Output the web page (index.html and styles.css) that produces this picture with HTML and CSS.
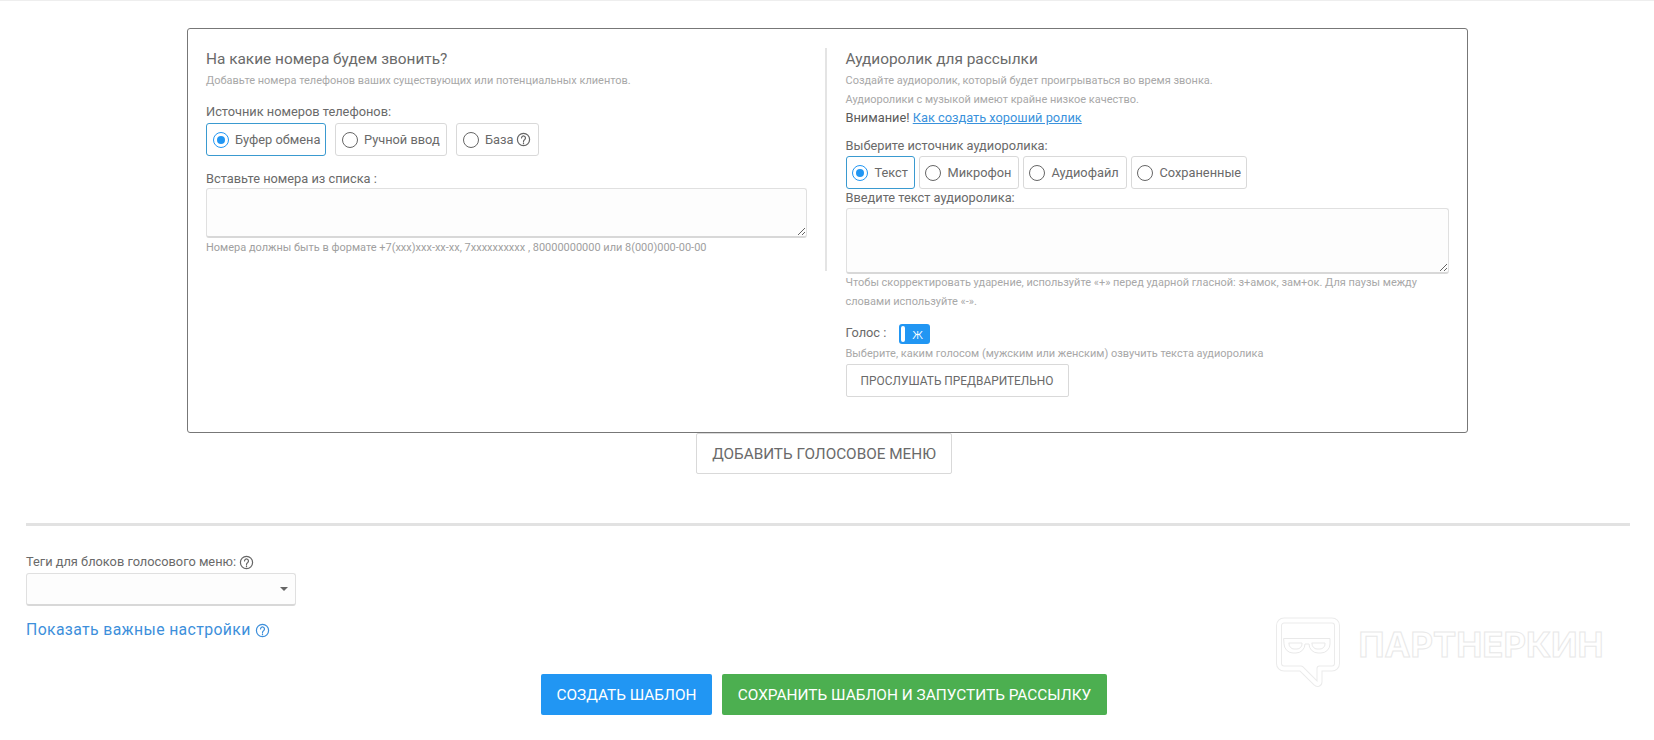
FILE: index.html
```html
<!DOCTYPE html>
<html lang="ru">
<head>
<meta charset="utf-8">
<title>Рассылка</title>
<link rel="stylesheet" href="styles.css">
</head>
<body>
<main class="page">
  <section class="card">
    <div class="col col-left">
      <h2 class="title">На какие номера будем звонить?</h2>
      <p class="hint hint-first">Добавьте номера телефонов ваших существующих или потенциальных клиентов.</p>
      <div class="label label-source">Источник номеров телефонов:</div>
      <div class="radios radios-left">
        <div class="radio active"><span class="dot"></span>Буфер обмена</div>
        <div class="radio"><span class="dot"></span>Ручной ввод</div>
        <div class="radio"><span class="dot"></span>База
          <svg class="q" viewBox="0 0 16 16"><circle cx="8" cy="8" r="6.5"/><path d="M5.9 6.3a2.1 2.1 0 1 1 3.4 1.7c-.8.6-1.3 1-1.3 2"/><path d="M8 11.6v.9"/></svg>
        </div>
      </div>
      <div class="label label-paste">Вставьте номера из списка :</div>
      <textarea class="area area-left"></textarea>
      <p class="hint hint-format">Номера должны быть в формате +7(xxx)xxx-xx-xx, 7xxxxxxxxxx , 80000000000 или 8(000)000-00-00</p>
    </div>
    <div class="col col-right">
      <h2 class="title">Аудиоролик для рассылки</h2>
      <p class="hint hint-first">Создайте аудиоролик, который будет проигрываться во время звонка.</p>
      <p class="hint">Аудиоролики с музыкой имеют крайне низкое качество.</p>
      <p class="attention">Внимание! <a class="link" href="#">Как создать хороший ролик</a></p>
      <div class="label label-audio">Выберите источник аудиоролика:</div>
      <div class="radios radios-right">
        <div class="radio active"><span class="dot"></span>Текст</div>
        <div class="radio"><span class="dot"></span>Микрофон</div>
        <div class="radio"><span class="dot"></span>Аудиофайл</div>
        <div class="radio"><span class="dot"></span>Сохраненные</div>
      </div>
      <div class="label label-text">Введите текст аудиоролика:</div>
      <textarea class="area area-right"></textarea>
      <p class="hint hint-stress">Чтобы скорректировать ударение, используйте «+» перед ударной гласной: з+амок, зам+ок. Для паузы между словами используйте «-».</p>
      <div class="voice">
        <span class="label">Голос :</span>
        <span class="toggle"><span class="knob"></span>ж</span>
      </div>
      <p class="hint hint-voice">Выберите, каким голосом (мужским или женским) озвучить текста аудиоролика</p>
      <button class="btn btn-listen" type="button">ПРОСЛУШАТЬ ПРЕДВАРИТЕЛЬНО</button>
    </div>
  </section>

  <div class="add-row">
    <button class="btn btn-add" type="button">ДОБАВИТЬ ГОЛОСОВОЕ МЕНЮ</button>
  </div>

  <hr class="rule">

  <div class="label label-tags">Теги для блоков голосового меню:
    <svg class="q q-tags" viewBox="0 0 16 16"><circle cx="8" cy="8" r="6.5"/><path d="M5.9 6.3a2.1 2.1 0 1 1 3.4 1.7c-.8.6-1.3 1-1.3 2"/><path d="M8 11.6v.9"/></svg>
  </div>
  <div class="select"><span class="caret"></span></div>

  <a class="settings" href="#">Показать важные настройки
    <svg class="q q-link" viewBox="0 0 16 16"><circle cx="8" cy="8" r="6.5"/><path d="M5.9 6.3a2.1 2.1 0 1 1 3.4 1.7c-.8.6-1.3 1-1.3 2"/><path d="M8 11.6v.9"/></svg>
  </a>

  <div class="actions">
    <button class="btn-solid blue" type="button">СОЗДАТЬ ШАБЛОН</button>
    <button class="btn-solid green" type="button">СОХРАНИТЬ ШАБЛОН И ЗАПУСТИТЬ РАССЫЛКУ</button>
  </div>
</main>

<svg class="watermark" viewBox="0 0 330 72" width="330" height="72">
  <path class="wm-outer" d="M8 3.500h48a5 5 0 0 1 5 5v38a5 5 0 0 1-5 5H43.500v13.500a2 2 0 0 1-3.500 1.300L25 51.500H8a5 5 0 0 1-5-5v-38a5 5 0 0 1 5-5z"/>
  <path class="wm-inner" d="M8 3.500h48a5 5 0 0 1 5 5v38a5 5 0 0 1-5 5H43.500v13.500a2 2 0 0 1-3.500 1.300L25 51.500H8a5 5 0 0 1-5-5v-38a5 5 0 0 1 5-5z"/>
  <path class="wm-line" d="M8 21.500h46v5.500a9 9 0 0 1-9 9h-3a9 9 0 0 1-9-9h-4a9 9 0 0 1-9 9h-3a9 9 0 0 1-9-9zM13 26h13v1a5 5 0 0 1-5 5h-3a5 5 0 0 1-5-5zM36 26h13v1a5 5 0 0 1-5 5h-3a5 5 0 0 1-5-5z"/>
  <text class="wm-text" x="82.500" y="40" textLength="245" lengthAdjust="spacingAndGlyphs">ПАРТНЕРКИН</text>
</svg>
</body>
</html>
```
FILE: styles.css
```css
* { box-sizing: border-box; }
html, body { margin: 0; padding: 0; }
body {
  width: 1654px;
  height: 740px;
  overflow: hidden;
  background: #fff;
  color: #666;
  font-family: Roboto, "Noto Sans", sans-serif;
  font-size: 12.8px;
  position: relative;
  border-top: 1px solid #eee;
}
.page { padding: 27px 24px 0 26px; }

.card {
  width: 1281px;
  height: 405px;
  margin-left: 161px;
  border: 1px solid #777;
  border-radius: 3px;
  display: grid;
  grid-template-columns: 621px 1fr;
  align-items: start;
  padding: 19px 0 0 18px;
}
.col-left {
  height: 223px;
  padding-right: 18px;
  border-right: 2px solid #e4e4e4;
}
.col-right { padding: 0 18px 0 18.500px; }

.title {
  margin: 0;
  font-size: 15.4px;
  font-weight: 400;
  line-height: 22px;
  color: #6a6a6a;
}
.hint {
  margin: 0;
  font-size: 10.97px;
  line-height: 19px;
  color: #a8a8a8;
}
.hint-first { margin-top: 1px; }
.hint-format { color: #a0a0a0; }
.hint-stress { margin-top: -1px; }
.hint-voice { line-height: 20px; }

.label { font-size: 12.8px; line-height: 18px; color: #6a6a6a; }
.label-source { margin-top: 13px; }
.label-paste { margin-top: 14px; }
.label-audio { margin-top: 10px; }

.attention { margin: -1px 0 0; font-size: 12.8px; line-height: 19px; color: #5a5a5a; }
.link { color: #3a92dc; }

.radios { display: flex; height: 33px; margin-top: 2px; }
.radios-left { gap: 9px; }
.radios-right { gap: 4px; margin-top: 1px; }
.radio {
  display: flex;
  align-items: center;
  gap: 6.5px;
  height: 33px;
  padding: 0 4px 0 5.500px;
  border: 1px solid #d9d9d9;
  border-radius: 3px;
  font-size: 12.8px;
  color: #6a6a6a;
  white-space: nowrap;
}
.radio.active { border-color: #3a9ad0; }
.dot {
  width: 16px;
  height: 16px;
  flex: none;
  border: 1px solid #666;
  border-radius: 50%;
  background: #fff;
  position: relative;
}
.active .dot { border-color: #2196f3; }
.active .dot::after {
  content: "";
  position: absolute;
  inset: 3px;
  border-radius: 50%;
  background: #2196f3;
}
.radios-left .radio:nth-child(1) { width: 120px; }
.radios-left .radio:nth-child(2) { width: 112px; }
.radios-left .radio:nth-child(3) { width: 83px; }
.radios-right .radio:nth-child(1) { width: 69px; }
.radios-right .radio:nth-child(2) { width: 100px; }
.radios-right .radio:nth-child(3) { width: 104px; }
.radios-right .radio:nth-child(4) { width: 116px; }

.q { width: 15px; height: 15px; flex: none; vertical-align: -3px; }
.radio .q { margin-left: -4px; }
.q circle, .q path { fill: none; stroke: #666; stroke-width: 1.3; stroke-linecap: round; }
.q-link circle, .q-link path { stroke: #3d8fdb; }

.area {
  display: block;
  width: 100%;
  margin: 0;
  background: #fdfdfd;
  border: 1px solid #e0e0e0;
  border-bottom: 2px solid #d8d8d8;
  border-radius: 3px;
  outline: none;
}
.area-left { height: 50px; }
.area-right { height: 66px; margin-top: 1px; }

.voice { display: flex; align-items: center; gap: 13px; height: 20px; margin-top: 13px; }
.voice .label { position: relative; top: -1px; }
.toggle {
  display: flex;
  align-items: center;
  width: 31px;
  height: 20px;
  padding-left: 2px;
  background: #2196f3;
  border-radius: 3px;
  color: #fff;
  font-size: 14px;
  font-weight: 300;
}
.knob {
  width: 4px;
  height: 16px;
  margin-right: 7px;
  background: #fff;
  border-radius: 2px;
}

.btn {
  display: block;
  background: #fff;
  border: 1px solid #d9d9d9;
  border-radius: 2px;
  color: #6a6a6a;
  font-family: inherit;
  padding: 0;
}
.btn-listen { width: 223px; height: 33px; font-size: 11.9px; }
.add-row { display: flex; justify-content: center; height: 41px; padding-right: 8px; }
.btn-add { width: 256px; height: 41px; font-size: 15.3px; }

.rule {
  margin: 49px 0 0;
  height: 3px;
  border: 0;
  background: #e2e2e2;
}
.label-tags { margin-top: 26px; line-height: 20px; display: flex; align-items: center; gap: 3px; }
.select {
  position: relative;
  width: 270px;
  height: 33px;
  margin-top: 1px;
  background: #fdfdfd;
  border: 1px solid #e0e0e0;
  border-bottom: 2px solid #d8d8d8;
  border-radius: 3px;
}
.caret {
  position: absolute;
  right: 7px;
  top: 13px;
  width: 0;
  height: 0;
  border-left: 4px solid transparent;
  border-right: 4px solid transparent;
  border-top: 4px solid #666;
}
.settings {
  display: block;
  margin-top: 13px;
  font-size: 15.8px;
  line-height: 22px;
  color: #3d8fdb;
  text-decoration: none;
  letter-spacing: .36px;
}
.actions { display: flex; justify-content: center; gap: 10px; margin-top: 33px; padding-right: 8px; }
.btn-solid {
  height: 41px;
  border: 0;
  border-radius: 2px;
  color: #fff;
  font-family: inherit;
  font-size: 15.4px;
  padding: 0;
}
.blue { width: 171px; background: #2196f3; }
.green { width: 385px; background: #4caf50; }

.watermark { position: absolute; left: 1276px; top: 616px; }
.wm-outer, .wm-inner, .wm-line { fill: none; stroke-linejoin: round; stroke-linecap: round; }
.wm-outer { stroke: #ebebeb; stroke-width: 6; }
.wm-inner { stroke: #fff; stroke-width: 4; }
.wm-line { stroke: #e9e9e9; stroke-width: 1; }
.wm-text {
  font-family: Inter, Roboto, sans-serif;
  font-weight: 700;
  font-size: 34.4px;
  fill: #fff;
  stroke: #e8e8e8;
  stroke-width: 1;
}
```
